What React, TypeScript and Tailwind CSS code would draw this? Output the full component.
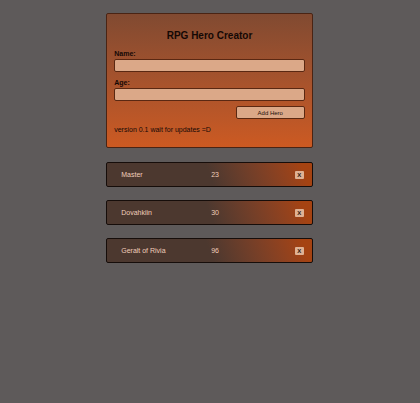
import { useState, type FormEvent } from "react";

type Hero = { id: number; name: string; age: string };

const initialHeroes: Hero[] = [
  { id: 1, name: "Master", age: "23" },
  { id: 2, name: "Dovahkiin", age: "30" },
  { id: 3, name: "Geralt of Rivia", age: "96" },
];

const fieldClass =
  "block h-[13px] w-full rounded-[2px] border border-[#5a2812] bg-[#dba888] px-1 text-[7px] text-[#140805] outline-none";

function Field({ id, label, value, onChange }: { id: string; label: string; value: string; onChange: (value: string) => void }) {
  return (
    <div>
      <label htmlFor={id} className="block h-[11px] text-[7px] leading-[12px] font-bold">
        {label}
      </label>
      <input id={id} className={fieldClass} value={value} onChange={(e) => onChange(e.target.value)} />
    </div>
  );
}

function HeroRow({ hero, onRemove }: { hero: Hero; onRemove: () => void }) {
  return (
    <li className="flex h-[25px] items-center rounded-[2px] border border-[#160d0a] bg-linear-70 from-[#4c382f] from-50% to-[#a54312] to-95% pr-[8px] pl-[14px] text-[7px] leading-[12px] text-[#f0cdba]">
      <span className="w-[90px] pt-px">{hero.name}</span>
      <span className="flex-1 pt-px">{hero.age}</span>
      <button
        type="button"
        aria-label={"Remove " + hero.name}
        onClick={onRemove}
        className="flex h-[8px] w-[9px] items-center justify-center rounded-[1px] bg-[#dfb294] text-[6px] leading-none font-bold text-[#24110a]"
      >
        X
      </button>
    </li>
  );
}

export default function App() {
  const [heroes, setHeroes] = useState(initialHeroes);
  const [name, setName] = useState("");
  const [age, setAge] = useState("");

  const addHero = (event: FormEvent) => {
    event.preventDefault();
    if (!name.trim()) return;
    setHeroes([...heroes, { id: Date.now(), name, age }]);
    setName("");
    setAge("");
  };

  return (
    <main className="min-h-screen bg-[#5e5a5a] pt-[13px] pr-px font-['Liberation_Sans',Arial,sans-serif]">
      <div className="mx-auto w-[49.3%]">
        <form
          onSubmit={addHero}
          className="rounded-[2px] border border-[#4a2414] bg-linear-to-b from-[#814a31] to-[#cc5a22] px-[7px] pt-[15px] pb-[12px] text-[#140805]"
        >
          <h1 className="mb-[5px] text-center text-[10px] leading-[14px] font-bold">RPG Hero Creator</h1>
          <div className="flex flex-col gap-[5px]">
            <Field id="hero-name" label="Name:" value={name} onChange={setName} />
            <Field id="hero-age" label="Age:" value={age} onChange={setAge} />
            <button
              type="submit"
              className="flex h-[13px] w-[69px] items-center justify-center self-end rounded-[2px] border border-[#5a2812] bg-[#dba888] text-[6px] leading-none text-[#1c0d08]"
            >
              Add Hero
            </button>
          </div>
          <p className="mt-[6px] text-[7px] leading-[10px]">version 0.1 wait for updates =D</p>
        </form>
        <ul className="mt-[14px] flex flex-col gap-[13px]">
          {heroes.map((hero) => (
            <HeroRow key={hero.id} hero={hero} onRemove={() => setHeroes(heroes.filter((h) => h.id !== hero.id))} />
          ))}
        </ul>
      </div>
    </main>
  );
}
